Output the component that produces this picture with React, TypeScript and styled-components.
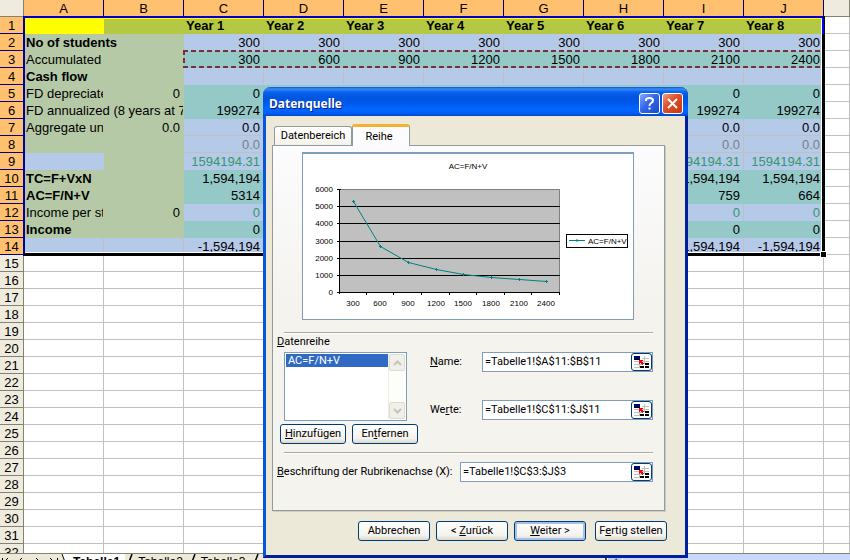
import React from "react";
import styled, { createGlobalStyle, css } from "styled-components";

const GlobalStyle = createGlobalStyle`
  *, *::before, *::after { box-sizing: border-box; }
  html, body, #root { height: 100%; }
  body { margin: 0; background: #fff; overflow: hidden; }
  button, input, select { font: inherit; color: inherit; margin: 0; }
`;

const sheetFont = `"Liberation Sans", Arial, sans-serif`;
const dialogFont = `Roboto, Tahoma, sans-serif`;
const titleFont = `"Noto Sans", Tahoma, sans-serif`;

const tone = {
  blue: "#b5c9e9",
  teal: "#94c9c7",
  green: "#b5c9a6",
  olive: "#b5c843",
  yellow: "#ffff00",
  white: "#ffffff",
};
type Tone = keyof typeof tone;

/* ---------- workbook ---------- */

const Workbook = styled.main`
  position: relative;
  height: 100vh;
  display: flex;
  flex-direction: column;
  overflow: hidden;
  font: 13px/14px ${sheetFont};
  color: #000;
`;

const SheetArea = styled.div`
  position: relative;
  flex: 1;
  min-height: 0;
  overflow: hidden;
`;

const Sheet = styled.table`
  width: 100%;
  table-layout: fixed;
  border-collapse: separate;
  border-spacing: 0;
`;

const Col = styled.col<{ $w?: number }>`
  width: ${(p) => (p.$w ? `${p.$w}px` : "auto")};
`;

const Head = styled.th<{ $on?: boolean }>`
  height: 17px;
  padding: 2px 0 0;
  font-weight: 400;
  text-align: center;
  overflow: hidden;
  background: ${(p) => (p.$on ? "#ffc06f" : "#efebde")};
  border-right: 1px solid ${(p) => (p.$on ? "#000080" : "#848270")};
  border-bottom: 1px solid ${(p) => (p.$on ? "#000080" : "#848270")};
`;

const Cell = styled.td<{
  $tone: Tone;
  $align?: "left" | "right";
  $bold?: boolean;
  $ink?: string;
  $right?: boolean;
  $bottom?: boolean;
}>`
  height: 17px;
  padding: 2px ${(p) => (p.$align === "right" ? 3 : 0)}px 0 2px;
  white-space: nowrap;
  overflow: hidden;
  text-align: ${(p) => p.$align ?? "left"};
  font-weight: ${(p) => (p.$bold ? 700 : 400)};
  color: ${(p) => p.$ink ?? "#000"};
  background: ${(p) => tone[p.$tone]};
  border-right: 1px solid ${(p) => (p.$right ? "#c0c0c0" : tone[p.$tone])};
  border-bottom: 1px solid ${(p) => (p.$bottom ? "#c0c0c0" : tone[p.$tone])};
`;

const Selection = styled.div`
  position: absolute;
  left: 23px;
  top: 16px;
  width: 802px;
  height: 240px;
  border: solid #000;
  border-width: 2px 3px 3px 2px;
  border-top-color: #0000c8;
  border-left-color: #0000a0;
  box-shadow: inset 0 1px #ffff00, inset 0 -1px #fff, inset -1px 0 #fff;
  pointer-events: none;

  &::before {
    content: "";
    position: absolute;
    right: -2px;
    top: 0;
    width: 2px;
    height: 16px;
    background: #0000ff;
  }

  &::after {
    content: "";
    position: absolute;
    right: -4px;
    bottom: -4px;
    width: 5px;
    height: 5px;
    background: #000;
    outline: 1px solid #fff;
  }
`;

const CopiedRange = styled.div`
  position: absolute;
  left: 183px;
  top: 50px;
  width: 641px;
  height: 18px;
  pointer-events: none;
  background:
    repeating-linear-gradient(90deg, #7a3038 0 5px, transparent 5px 8px) 0 0 / 100% 2px no-repeat,
    repeating-linear-gradient(90deg, #7a3038 0 5px, transparent 5px 8px) 0 100% / 100% 2px no-repeat,
    repeating-linear-gradient(180deg, #7a3038 0 5px, transparent 5px 8px) 0 0 / 2px 100% no-repeat,
    repeating-linear-gradient(180deg, #c8f0c8 0 5px, transparent 5px 8px) 100% 0 / 2px 100% no-repeat;
`;

const SheetBar = styled.nav`
  height: 7px;
  display: flex;
  overflow: hidden;
  background: #ece9d8;
  border-top: 1px solid #848270;
`;

const SheetTab = styled.button<{ $on?: boolean }>`
  height: 16px;
  flex: none;
  padding: 0 5px;
  line-height: 16px;
  border: 0;
  background: ${(p) => (p.$on ? "#fff" : "#ece9d8")};
  font-size: 12px;
  font-weight: ${(p) => (p.$on ? 700 : 400)};
`;

const TabNav = styled.div`
  width: 60px;
  height: 16px;
  flex: none;
`;

const BarScroll = styled.div`
  margin-left: auto;
  width: 245px;
  height: 16px;
  display: flex;
  background: #c9d8fc;
  border-left: 2px solid #404040;
`;

const BarScrollButton = styled.button`
  width: 16px;
  padding: 2px 0 0;
  border: 1px solid #fff;
  border-radius: 2px;
  background: #bccffa;
`;

/* ---------- dialog ---------- */

const Dialog = styled.section`
  position: absolute;
  left: 263px;
  top: 87px;
  width: 425px;
  font: 11px/14px ${dialogFont};
  background: #ece9d8;
  border: solid #0831d9;
  border-width: 0 3px 3px;
  border-color: #0831d9 #001ea0 #001ea0 #0855dd;
  border-radius: 8px 8px 0 0;
`;

const TitleBar = styled.header`
  height: 29px;
  margin: 0 -3px;
  padding: 4px 5px 0 6px;
  display: flex;
  align-items: center;
  gap: 2px;
  border-radius: 8px 8px 0 0;
  background: linear-gradient(#0a4fd0 0, #3a8cf8 2px, #0a62ec 5px, #0055e0 10px, #0058ea 16px, #0066ff 22px, #0060f8 26px, #0046c8 29px);
`;

const Title = styled.h1`
  flex: 1;
  margin: 0;
  color: #fff;
  font: 700 12px/16px ${titleFont};
  text-shadow: 1px 1px #0a1883;
`;

const CaptionButton = styled.button<{ $close?: boolean }>`
  width: 21px;
  height: 21px;
  padding: 0;
  display: grid;
  place-items: center;
  border: 1px solid #fff;
  border-radius: 3px;
  background: ${(p) =>
    p.$close
      ? "linear-gradient(135deg, #f0a088, #e0522c 40%, #c83810)"
      : "linear-gradient(135deg, #86aaf8, #3467ec 45%, #1c48c8)"};
`;

const Body = styled.div`
  padding: 8px 20px 14px 6px;
`;

const Tabs = styled.div`
  display: flex;
  align-items: flex-end;
  height: 21px;
  padding-left: 2px;
`;

const Tab = styled.button<{ $on?: boolean }>`
  padding: 0;
  border: 1px solid #919b9c;
  border-bottom: 0;
  border-radius: 3px 3px 0 0;
  background: linear-gradient(#fff, #f3f2ea);
  width: 78px;
  height: 19px;
  ${(p) =>
    p.$on &&
    css`
      position: relative;
      width: 58px;
      height: 22px;
      margin-bottom: -1px;
      padding-right: 4px;
      background: #fcfcfe;
      border-top: 3px solid #f8b030;
    `}
`;

const Panel = styled.div`
  padding: 6px 11px 28px 4px;
  border: 1px solid #919b9c;
  background: linear-gradient(#fcfcfe, #f4f3ee 45%, #f4f3ee);
  box-shadow: 1px 1px #d0cebf;
`;

const ChartBox = styled.figure`
  margin: 0 19px 12px 25px;
  height: 168px;
  background: #fff;
  border: 1px solid #7f9db9;
  border-top-width: 2px;
`;

const Rule = styled.hr`
  height: 2px;
  margin: 0 0 0 7px;
  border: 0;
  border-top: 1px solid #aca899;
  border-bottom: 1px solid #fff;
`;

const SeriesArea = styled.div`
  display: grid;
  grid-template-columns: 141px minmax(0, 1fr);
  column-gap: 12px;
  height: 118px;
`;

const SeriesList = styled.div`
  display: flex;
  flex-direction: column;
  padding-top: 1px;
`;

const Label = styled.label`
  height: 17px;
  white-space: nowrap;
`;

const ListBox = styled.div`
  display: flex;
  height: 69px;
  margin: 0 11px 3px 7px;
  padding: 1px;
  background: #fff;
  border: 1px solid #7f9db9;
`;

const SeriesSelect = styled.select`
  flex: 1;
  min-width: 0;
  padding: 0;
  border: 0;
  outline: 0;
  border-radius: 0;
  background: #fff;
  overflow: hidden;
`;

const SeriesOption = styled.option`
  padding: 0 2px;
  min-height: 13px;
  height: 13px;
  line-height: 13px;
  &:checked {
    color: #fff;
    background: #316ac5 linear-gradient(#316ac5, #316ac5);
  }
`;

const ScrollBar = styled.div`
  width: 17px;
  display: flex;
  flex-direction: column;
  justify-content: space-between;
  background: #fdfdfa;
  border-left: 1px solid #eeede5;
`;

const ScrollButton = styled.button`
  height: 17px;
  padding: 0;
  display: grid;
  place-items: center;
  border: 1px solid #dddcd0;
  border-radius: 2px;
  background: #f0efe8;
`;

const ButtonPair = styled.div`
  display: flex;
  gap: 6px;
  margin-left: 3px;
`;

const Button = styled.button<{ $default?: boolean; $wide?: boolean }>`
  width: ${(p) => (p.$wide ? 72 : 66)}px;
  height: 20px;
  flex: none;
  padding: 0;
  white-space: nowrap;
  border: 1px solid #003c74;
  border-radius: 3px;
  background: linear-gradient(#fff, #f3f2ec 75%, #dcd8cc);
  box-shadow: ${(p) => (p.$default ? "inset 0 0 0 2px #a5c0ee" : "none")};
`;

const Fields = styled.div`
  display: grid;
  grid-auto-rows: 20px;
  row-gap: 28px;
  padding-top: 18px;
`;

const Field = styled.div`
  display: grid;
  grid-template-columns: 52px minmax(0, 1fr);
  align-items: center;
`;

const AxisField = styled.div`
  display: grid;
  grid-template-columns: 183px minmax(0, 1fr);
  align-items: center;
  padding-top: 8px;
  white-space: nowrap;
`;

const RefBox = styled.span`
  display: flex;
  height: 20px;
  background: #fff;
  border: 1px solid #7f9db9;
`;

const RefInput = styled.input`
  flex: 1;
  width: 0;
  min-width: 0;
  padding: 0 2px;
  border: 0;
  outline: 0;
  background: none;
`;

const RefButton = styled.button`
  width: 21px;
  height: 18px;
  padding: 0;
  display: grid;
  place-items: center;
  border: 1px solid #003c74;
  border-radius: 3px;
  background: #fff;
`;

const Footer = styled.footer`
  display: flex;
  justify-content: flex-end;
  gap: 6px;
  margin: 10px -2px 0 0;

  & > :last-child {
    margin-left: 3px;
  }
`;

/* ---------- data ---------- */

const columns = ["A", "B", "C", "D", "E", "F", "G", "H", "I", "J"];
const rep = (v: string) => Array<string>(8).fill(v);

interface RowSpec {
  a: string;
  b?: string;
  bold?: boolean;
  values: string[];
  tone: Tone;
  aTone?: Tone;
  bTone?: Tone;
  ink?: string;
  head?: boolean;
  bottom?: boolean;
}

const rows: RowSpec[] = [
  { a: "", b: "", values: rep("").map((_, i) => `Year ${i + 1}`), tone: "olive", aTone: "yellow", bTone: "olive", head: true },
  { a: "No of students", bold: true, values: rep("300"), tone: "blue" },
  { a: "Accumulated", b: "", values: ["300", "600", "900", "1200", "1500", "1800", "2100", "2400"], tone: "teal" },
  { a: "Cash flow", bold: true, values: rep(""), tone: "blue" },
  { a: "FD depreciated", b: "0", values: rep("0"), tone: "teal" },
  { a: "FD annualized (8 years at 7%)", values: rep("199274"), tone: "teal" },
  { a: "Aggregate units", b: "0.0", values: rep("0.0"), tone: "blue", bottom: true },
  { a: "", b: "", values: rep("0.0"), tone: "blue", ink: "#808080", bottom: true },
  { a: "", b: "", values: rep("1594194.31"), tone: "blue", aTone: "blue", ink: "#339966" },
  { a: "TC=F+VxN", bold: true, values: rep("1,594,194"), tone: "teal" },
  { a: "AC=F/N+V", bold: true, values: ["5314", "2657", "1771", "1329", "1063", "886", "759", "664"], tone: "teal" },
  { a: "Income per student", b: "0", values: rep("0"), tone: "blue", ink: "#339966" },
  { a: "Income", bold: true, values: rep("0"), tone: "teal" },
  { a: "", b: "", values: rep("-1,594,194"), tone: "blue", aTone: "blue", bTone: "blue" },
];

const emptyRows = Array.from({ length: 18 }, (_, i) => i + 15);

function DataRow({ row, n }: { row: RowSpec; n: number }) {
  const spill = row.b === undefined;
  const grid = row.tone === "blue";
  return (
    <tr>
      <Head $on scope="row">{n}</Head>
      <Cell $tone={row.aTone ?? "green"} $bold={row.bold} colSpan={spill ? 2 : 1} $right={n === 14}>
        {row.a}
      </Cell>
      {!spill && (
        <Cell $tone={row.bTone ?? "green"} $align="right" $right={n === 14}>{row.b}</Cell>
      )}
      {row.values.map((v, i) => (
        <Cell key={i} $tone={row.tone} $align={row.head ? "left" : "right"} $bold={row.head} $ink={row.ink} $right={grid} $bottom={row.bottom}>
          {v}
        </Cell>
      ))}
      <Cell $tone="white" $right $bottom />
    </tr>
  );
}

/* ---------- chart ---------- */

const series = [5314, 2657, 1771, 1329, 1063, 886, 759, 664];
const plot = { x: 36, y: 35, w: 221, h: 103 };
const yOf = (v: number) => Math.round(plot.y + plot.h - (v / 6000) * plot.h);
const xOf = (i: number) => Math.round(plot.x + (plot.w / 8) * (i + 0.5));

function Chart() {
  return (
    <svg width="100%" height="165" viewBox="0 0 330 165" fontFamily={sheetFont} fontSize="8" role="img" aria-label="AC=F/N+V">
      <text x="165" y="15" textAnchor="middle">AC=F/N+V</text>
      <rect x={plot.x} y={plot.y} width={plot.w} height={plot.h} fill="#c0c0c0" />
      <path d={`M${plot.x} ${plot.y + 0.5}h${plot.w - 0.5}v${plot.h}`} fill="none" stroke="#808080" />
      {[0, 1, 2, 3, 4, 5, 6].map((k) => (
        <g key={k}>
          <path
            d={`M${plot.x - 2} ${yOf(k * 1000) + 0.5}h${k === 6 ? 4 : plot.w + 2}`}
            stroke="#000"
          />
          <text x={plot.x - 6} y={yOf(k * 1000) + 3} textAnchor="end">{k * 1000}</text>
        </g>
      ))}
      <path d={`M${plot.x + 0.5} ${plot.y}v${plot.h + 2}`} stroke="#000" />
      {series.map((_, i) => (
        <g key={i}>
          <path d={`M${Math.round(plot.x + (plot.w / 8) * (i + 1)) - 0.5} ${plot.y + plot.h}v3`} stroke="#000" />
          <text x={xOf(i)} y={plot.y + plot.h + 14} textAnchor="middle">{(i + 1) * 300}</text>
        </g>
      ))}
      <polyline
        points={series.map((v, i) => `${xOf(i) + 0.5},${yOf(v) + 0.5}`).join(" ")}
        fill="none"
        stroke="#008080"
      />
      {series.map((v, i) => (
        <path key={i} d={`M${xOf(i) - 1} ${yOf(v) + 0.5}h3m-1.5 -1.5v3`} stroke="#008080" />
      ))}
      <rect x="263.5" y="80.5" width="61" height="13" fill="#fff" stroke="#000" />
      <path d="M266 86.5h16m-8 -1.5v3" stroke="#008080" />
      <text x="285" y="90">AC=F/N+V</text>
    </svg>
  );
}

function RangeIcon() {
  return (
    <svg width="17" height="14" viewBox="0 0 17 14" shapeRendering="crispEdges" aria-hidden="true">
      <path d="M1 6.500h15M1 9.500h8M1 12.500h8M9 3.500h7M6.500 4v9M11.500 1v8" stroke="#c0c0c0" fill="none" />
      <path d="M1 1h6v3H1z" fill="#000080" />
      <path d="M1 4h6v1H1z" fill="#000" />
      <path d="M7 11h4v2H7zM12 8h4v2h-4zM12 11h4v2h-4z" fill="#000" />
      <path d="M6 5h4v1h-1v1h1v1h1v1h-1v1H9V9H8V8H7v1H6z" fill="#f00" />
    </svg>
  );
}

function RefField({ id, value }: { id: string; value: string }) {
  return (
    <RefBox>
      <RefInput id={id} defaultValue={value} />
      <RefButton type="button" aria-label="Bereich auswählen"><RangeIcon /></RefButton>
    </RefBox>
  );
}

const Chevron = ({ d }: { d: string }) => (
  <svg width="9" height="6" viewBox="0 0 9 6" aria-hidden="true">
    <path d={d} fill="none" stroke="#c5c4bc" strokeWidth="2" />
  </svg>
);

const TabEdge = () => (
  <svg width="8" height="16" viewBox="0 0 8 16" aria-hidden="true">
    <path d="M7 0L1 16" fill="none" stroke="#000" strokeWidth="1.500" />
  </svg>
);

function DataSourceDialog() {
  return (
    <Dialog role="dialog" aria-labelledby="dlg-title">
      <TitleBar>
        <Title id="dlg-title">Datenquelle</Title>
        <CaptionButton type="button" aria-label="Hilfe">
          <svg width="13" height="15" viewBox="0 0 13 15" aria-hidden="true">
            <path d="M3 5V4q0-2 3.500-2t3.500 2.500q0 1.500-1.800 2.500T6.500 10M6.500 11.500v2" fill="none" stroke="#fff" strokeWidth="2" />
          </svg>
        </CaptionButton>
        <CaptionButton type="button" $close aria-label="Schließen">
          <svg width="13" height="13" viewBox="0 0 13 13" aria-hidden="true">
            <path d="M2 2l9 9M11 2l-9 9" stroke="#fff" strokeWidth="2" />
          </svg>
        </CaptionButton>
      </TitleBar>
      <Body>
        <Tabs role="tablist">
          <Tab type="button" role="tab" aria-selected={false}>Datenbereich</Tab>
          <Tab type="button" role="tab" aria-selected $on>Reihe</Tab>
        </Tabs>
        <Panel role="tabpanel">
          <ChartBox><Chart /></ChartBox>
          <Rule />
          <SeriesArea>
            <SeriesList>
              <Label htmlFor="series"><u>D</u>atenreihe</Label>
              <ListBox>
                <SeriesSelect id="series" size={4} defaultValue="ac">
                  <SeriesOption value="ac">AC=F/N+V</SeriesOption>
                </SeriesSelect>
                <ScrollBar>
                  <ScrollButton type="button" aria-label="Nach oben"><Chevron d="M1 5l3.500-3.500L8 5" /></ScrollButton>
                  <ScrollButton type="button" aria-label="Nach unten"><Chevron d="M1 1l3.500 3.500L8 1" /></ScrollButton>
                </ScrollBar>
              </ListBox>
              <ButtonPair>
                <Button type="button"><u>H</u>inzufügen</Button>
                <Button type="button">En<u>t</u>fernen</Button>
              </ButtonPair>
            </SeriesList>
            <Fields>
              <Field>
                <label htmlFor="name"><u>N</u>ame:</label>
                <RefField id="name" value="=Tabelle1!$A$11:$B$11" />
              </Field>
              <Field>
                <label htmlFor="values">We<u>r</u>te:</label>
                <RefField id="values" value="=Tabelle1!$C$11:$J$11" />
              </Field>
            </Fields>
          </SeriesArea>
          <Rule />
          <AxisField>
            <label htmlFor="axis"><u>B</u>eschriftung der Rubrikenachse (X):</label>
            <RefField id="axis" value="=Tabelle1!$C$3:$J$3" />
          </AxisField>
        </Panel>
        <Footer>
          <Button type="button" $wide>Abbrechen</Button>
          <Button type="button" $wide>&lt; <u>Z</u>urück</Button>
          <Button type="button" $wide $default><u>W</u>eiter &gt;</Button>
          <Button type="button" $wide>F<u>e</u>rtig stellen</Button>
        </Footer>
      </Body>
    </Dialog>
  );
}

export default function App() {
  return (
    <>
      <GlobalStyle />
      <Workbook>
        <SheetArea>
          <Sheet>
            <colgroup>
              <Col $w={24} />
              {columns.map((c) => <Col key={c} $w={80} />)}
              <Col />
            </colgroup>
            <thead>
              <tr>
                <Head aria-label="Alles" />
                {columns.map((c) => <Head key={c} $on scope="col">{c}</Head>)}
                <Head />
              </tr>
            </thead>
            <tbody>
              {rows.map((r, i) => <DataRow key={i} row={r} n={i + 1} />)}
              {emptyRows.map((n) => (
                <tr key={n}>
                  <Head scope="row">{n}</Head>
                  {columns.map((c) => <Cell key={c} $tone="white" $right $bottom />)}
                  <Cell $tone="white" $right $bottom />
                </tr>
              ))}
            </tbody>
          </Sheet>
          <CopiedRange />
          <Selection />
        </SheetArea>
        <SheetBar>
          <TabNav aria-hidden="true">
            <svg width="60" height="16" viewBox="0 0 60 16">
              <path d="M2.500 4v8M8 4L4 8l4 4M22 4l-4 4 4 4M36 4l4 4-4 4M50 4l4 4-4 4M57.500 4v8" fill="none" stroke="#000" />
            </svg>
          </TabNav>
          <svg width="8" height="16" viewBox="0 0 8 16" aria-hidden="true">
            <path d="M2 0h6v16z" fill="#fff" />
            <path d="M2 0l6 16" fill="none" stroke="#000" />
          </svg>
          <SheetTab type="button" $on>Tabelle1</SheetTab>
          <TabEdge />
          <SheetTab type="button">Tabelle2</SheetTab>
          <TabEdge />
          <SheetTab type="button">Tabelle3</SheetTab>
          <TabEdge />
          <BarScroll>
            <BarScrollButton type="button" aria-label="Nach links">
              <svg width="8" height="10" viewBox="0 0 8 10" aria-hidden="true">
                <path d="M6 1L2 5l4 4" fill="none" stroke="#4d6185" strokeWidth="2" />
              </svg>
            </BarScrollButton>
          </BarScroll>
        </SheetBar>
        <DataSourceDialog />
      </Workbook>
    </>
  );
}
